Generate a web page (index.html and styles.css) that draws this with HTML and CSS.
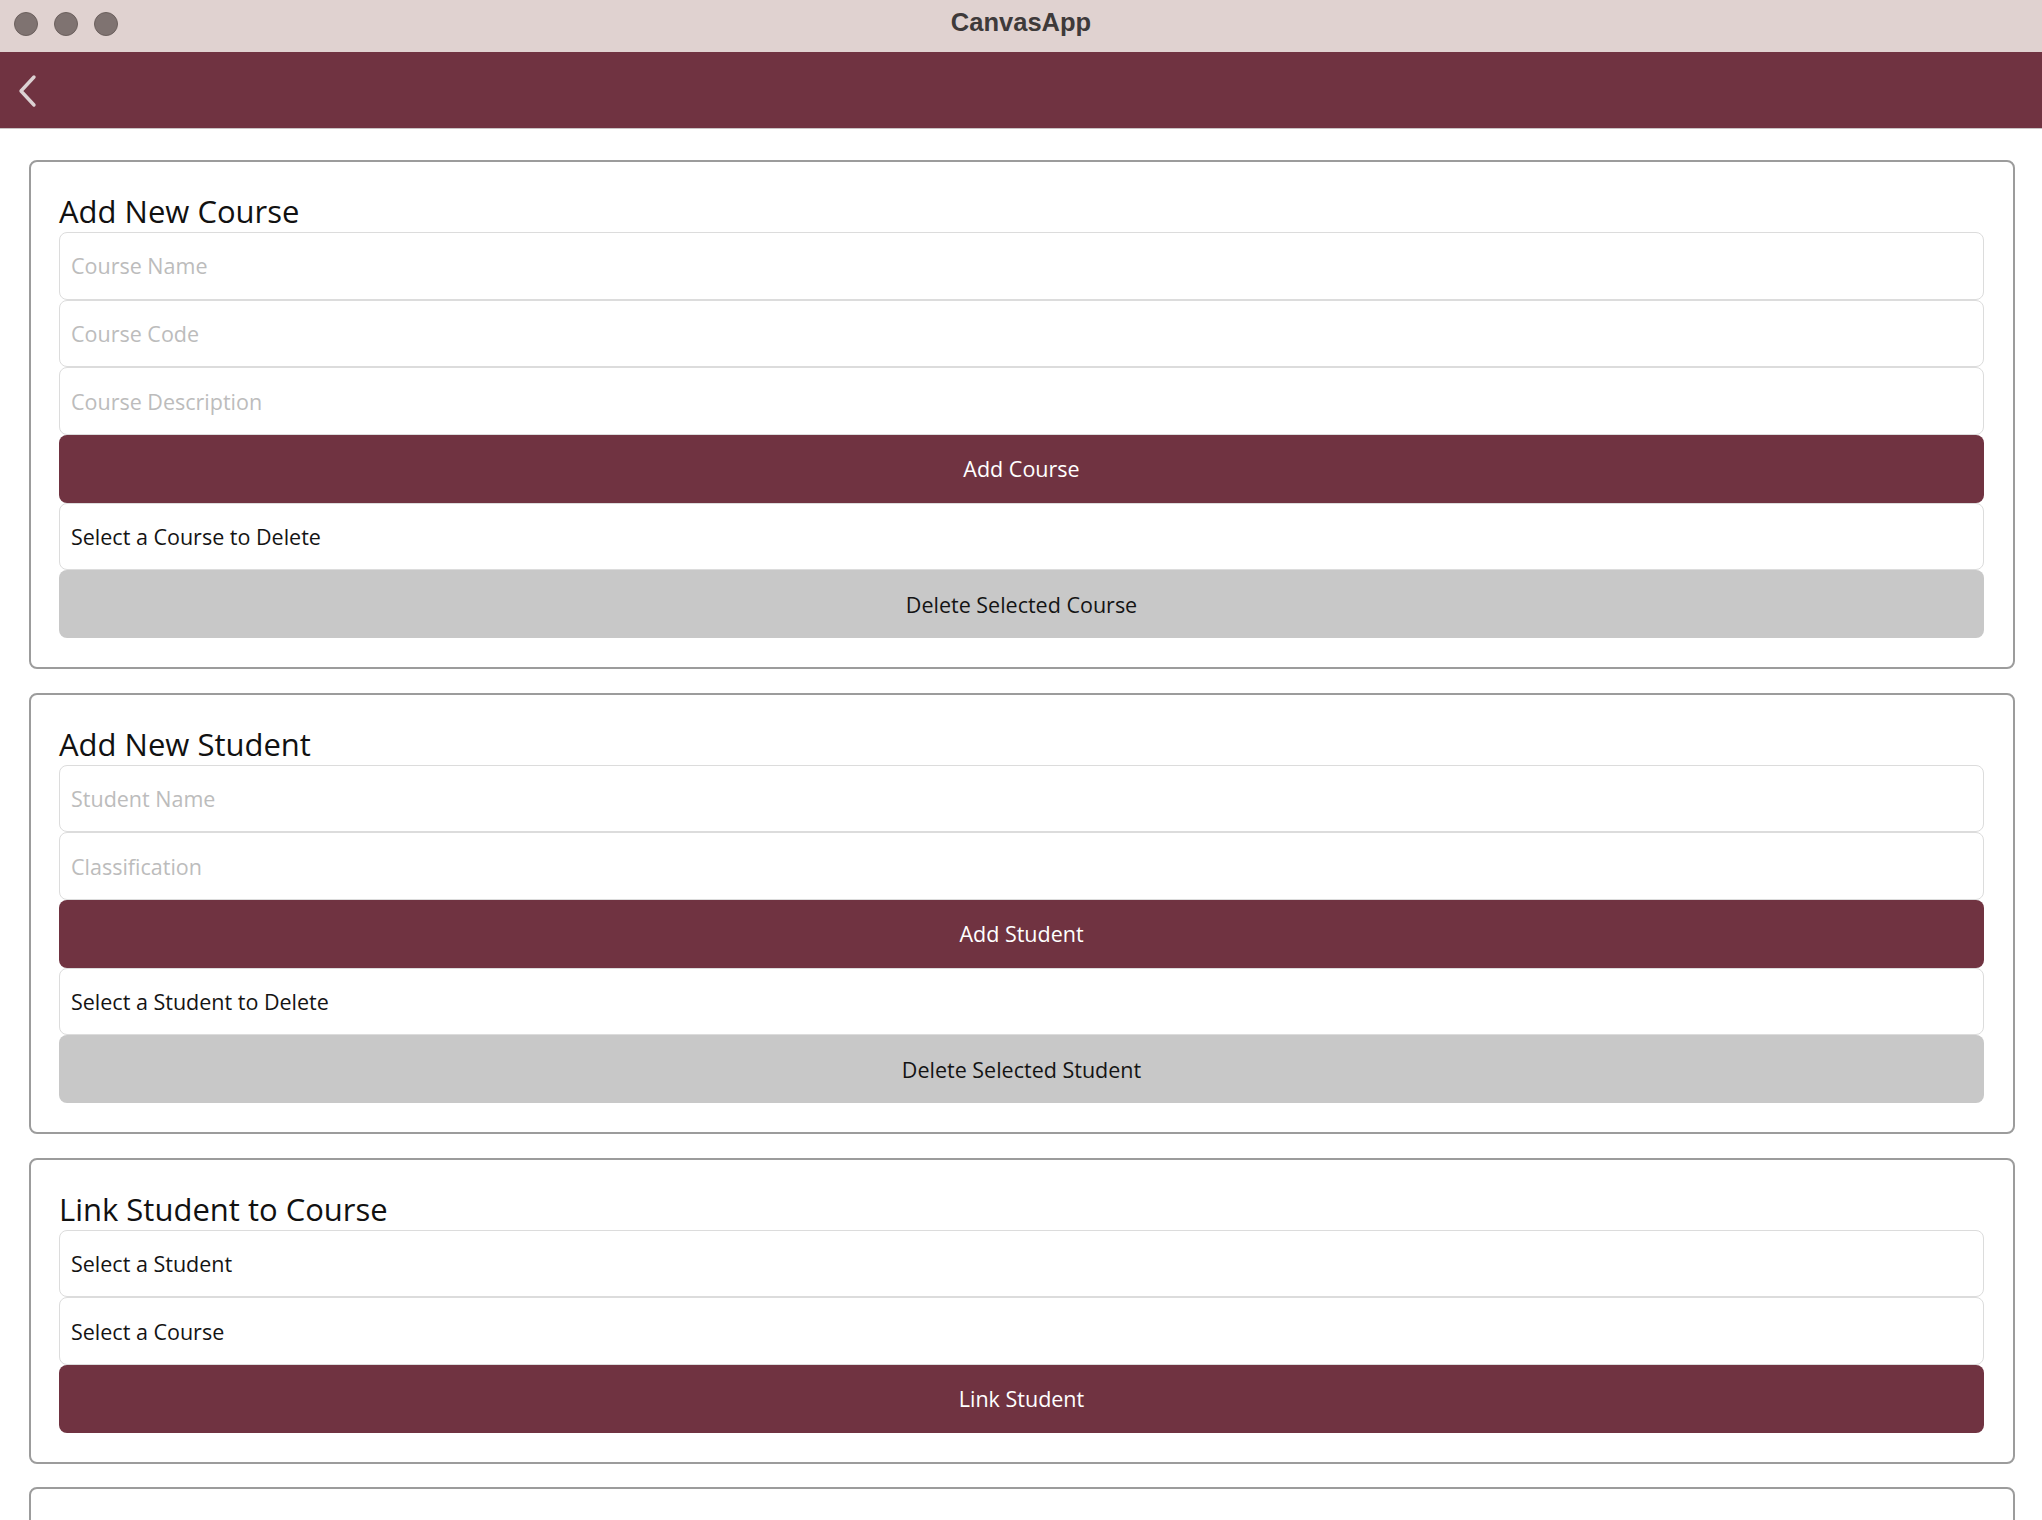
FILE: index.html
```html
<!DOCTYPE html>
<html>
<head>
<meta charset="utf-8">
<title>CanvasApp</title>
<link rel="stylesheet" href="styles.css">
</head>
<body>
<div class="window">
  <div class="titlebar">
    <div class="lights">
      <span class="light"></span><span class="light"></span><span class="light"></span>
    </div>
    <div class="app-title">CanvasApp</div>
  </div>
  <div class="navbar">
    <svg class="back" width="22" height="34" viewBox="0 0 22 34"><path d="M18 3 L5 17 L18 31" fill="none" stroke="#dcd2d3" stroke-width="3.4" stroke-linecap="round" stroke-linejoin="round"/></svg>
  </div>
  <div class="content">
    <section class="card">
      <h2 class="card-title">Add New Course</h2>
      <div class="field placeholder">Course Name</div>
      <div class="field placeholder">Course Code</div>
      <div class="field placeholder">Course Description</div>
      <div class="btn primary">Add Course</div>
      <div class="field">Select a Course to Delete</div>
      <div class="btn secondary">Delete Selected Course</div>
    </section>
    <section class="card">
      <h2 class="card-title">Add New Student</h2>
      <div class="field placeholder">Student Name</div>
      <div class="field placeholder">Classification</div>
      <div class="btn primary">Add Student</div>
      <div class="field">Select a Student to Delete</div>
      <div class="btn secondary">Delete Selected Student</div>
    </section>
    <section class="card">
      <h2 class="card-title">Link Student to Course</h2>
      <div class="field">Select a Student</div>
      <div class="field">Select a Course</div>
      <div class="btn primary">Link Student</div>
    </section>
    <section class="card">
      <h2 class="card-title">&nbsp;</h2>
    </section>
  </div>
</div>
</body>
</html>
```

FILE: styles.css
```css
* { box-sizing: border-box; }
html, body { margin: 0; padding: 0; background: #ffffff; }
body { width: 2042px; height: 1520px; overflow: hidden; font-family: "Open Sans", "Noto Sans", sans-serif; }
.window { display: flex; flex-direction: column; height: 1520px; }
.titlebar {
  height: 52px; background: #e0d2d0; position: relative;
  display: flex; align-items: center; justify-content: center;
  padding-bottom: 7px;
  flex: none;
}
.lights { position: absolute; left: 14px; top: 12px; display: flex; gap: 16px; }
.light { width: 24px; height: 24px; border-radius: 50%; background: #7f7371; border: 1px solid #6b605d; display: block; }
.app-title { font-family: "Liberation Sans", Arial, sans-serif; font-weight: bold; font-size: 25.5px; color: #3e3a3a; }
.navbar {
  height: 77px; background: #703341; flex: none;
  display: flex; align-items: center; padding-left: 16px;
  border-bottom: 1px solid #c9c3c4;
}
.back { display: block; margin-top: 2px; }
.content { display: flex; flex-direction: column; gap: 23.5px; padding: 31px 27px 0 29px; }
.card {
  border: 2px solid #9c9c9c; border-radius: 8px;
  padding: 28px 29px 29px 28px;
  display: flex; flex-direction: column;
  flex: none;
}
.card-title { margin: 0; font-weight: 400; font-size: 31px; line-height: 42px; color: #111; }
.field {
  height: 67.7px; border: 1px solid #dcdcdc; border-radius: 8px;
  display: flex; align-items: center; padding-left: 11px;
  font-size: 21.5px; color: #141414; background: #fff;
}
.field.placeholder { color: #bcbcbc; }
.btn {
  height: 67.7px; border-radius: 8px;
  display: flex; align-items: center; justify-content: center;
  font-size: 21.5px;
}
.btn.primary { background: #703341; color: #ffffff; }
.btn.secondary { background: #c8c8c8; color: #141414; }
```
